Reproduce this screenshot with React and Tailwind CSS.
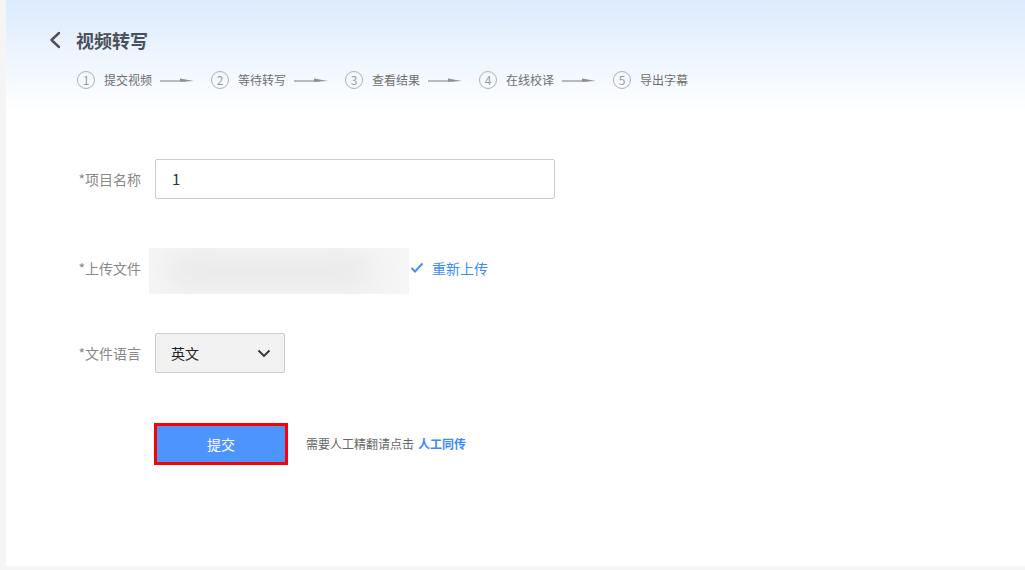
import React from "react";

const font = { fontFamily: '"Noto Sans CJK SC", "Noto Sans", sans-serif' };

function Arrow() {
  return (
    <svg width="34" height="8" viewBox="0 0 34 8" className="shrink-0">
      <line x1="0" y1="5" x2="26" y2="5" stroke="#8f8f8f" strokeWidth="1.2" />
      <polygon points="20,2.6 34,5 20,5.8" fill="#8f8f8f" />
    </svg>
  );
}

function Step({ n, label, last }) {
  return (
    <div className="flex items-center">
      <div className="w-[18px] h-[18px] rounded-full border border-[#b0b0b0] flex items-center justify-center text-[12px] leading-none text-[#9a9a9a]">
        {n}
      </div>
      <span className="ml-[9px] text-[12px] text-[#6f6f6f] leading-none">{label}</span>
      {!last && (
        <div className="ml-[8px] mr-[17px] flex items-center">
          <Arrow />
        </div>
      )}
    </div>
  );
}

export default function App() {
  const steps = ["提交视频", "等待转写", "查看结果", "在线校译", "导出字幕"];
  return (
    <div className="w-full h-[570px] bg-[#f5f5f5] flex overflow-hidden" style={font}>
      <div className="ml-[6px] h-[566px] flex-1 bg-white flex flex-col">
        <div className="h-[112px] bg-gradient-to-b from-[#dcebfd] to-white pl-[42px] pt-[29px]">
          <div className="flex items-center h-[22px]">
            <svg width="14" height="18" viewBox="0 0 14 18">
              <path d="M11 2 L3.5 9 L11 16" fill="none" stroke="#4b505b" strokeWidth="2.4" strokeLinecap="round" strokeLinejoin="round" />
            </svg>
            <span className="ml-[14px] text-[18px] font-bold text-[#4b505b] leading-none">视频转写</span>
          </div>
          <div className="flex items-center mt-[20px] ml-[29px]">
            {steps.map((s, i) => (
              <Step key={s} n={i + 1} label={s} last={i === steps.length - 1} />
            ))}
          </div>
        </div>

        <div className="pt-[47px] pl-[72px]">
          <div className="flex items-center">
            <div className="w-[63px] text-right text-[14px] text-[#888]">*项目名称</div>
            <div className="ml-[14px] w-[400px] h-[40px] border border-[#cccccc] rounded-[2px] flex items-center px-[16px] text-[15px] text-[#333]">
              1
            </div>
          </div>

          <div className="flex items-center mt-[49px]">
            <div className="w-[63px] text-right text-[14px] text-[#888] mb-[6px]">*上传文件</div>
            <div className="ml-[8px] w-[260px] h-[46px] bg-[#f6f6f6] relative overflow-hidden">
              <div className="absolute left-[16px] top-[8px] w-[210px] h-[30px] rounded-full bg-[#e6e6e6] blur-lg"></div>
            </div>
            <svg width="14" height="12" viewBox="0 0 14 12" className="ml-[1px] mb-[6px]">
              <path d="M1.5 6 L5 9.5 L12.5 1.5" fill="none" stroke="#4a8ef5" strokeWidth="2" />
            </svg>
            <span className="ml-[8px] text-[14px] text-[#3e8bf6] mb-[6px]">重新上传</span>
          </div>

          <div className="flex items-center mt-[39px]">
            <div className="w-[63px] text-right text-[14px] text-[#888]">*文件语言</div>
            <div className="ml-[14px] w-[130px] h-[40px] border border-[#cccccc] rounded-[2px] bg-[#f2f2f2] flex items-center justify-between pl-[15px] pr-[13px]">
              <span className="text-[14px] text-[#222]">英文</span>
              <svg width="14" height="9" viewBox="0 0 14 9">
                <path d="M1.5 1.5 L7 7 L12.5 1.5" fill="none" stroke="#333" strokeWidth="1.8" />
              </svg>
            </div>
          </div>

          <div className="flex items-center mt-[50px] ml-[76px]">
            <div className="w-[134px] h-[42px] border-[3px] border-[#ff0000] bg-[#4d94ff] flex items-center justify-center">
              <span className="text-[14px] text-white">提交</span>
            </div>
            <span className="ml-[18px] text-[12px] text-[#666]">需要人工精翻请点击</span>
            <span className="ml-[4px] text-[12px] font-bold text-[#3e8bf6]">人工同传</span>
          </div>
        </div>
      </div>
    </div>
  );
}
